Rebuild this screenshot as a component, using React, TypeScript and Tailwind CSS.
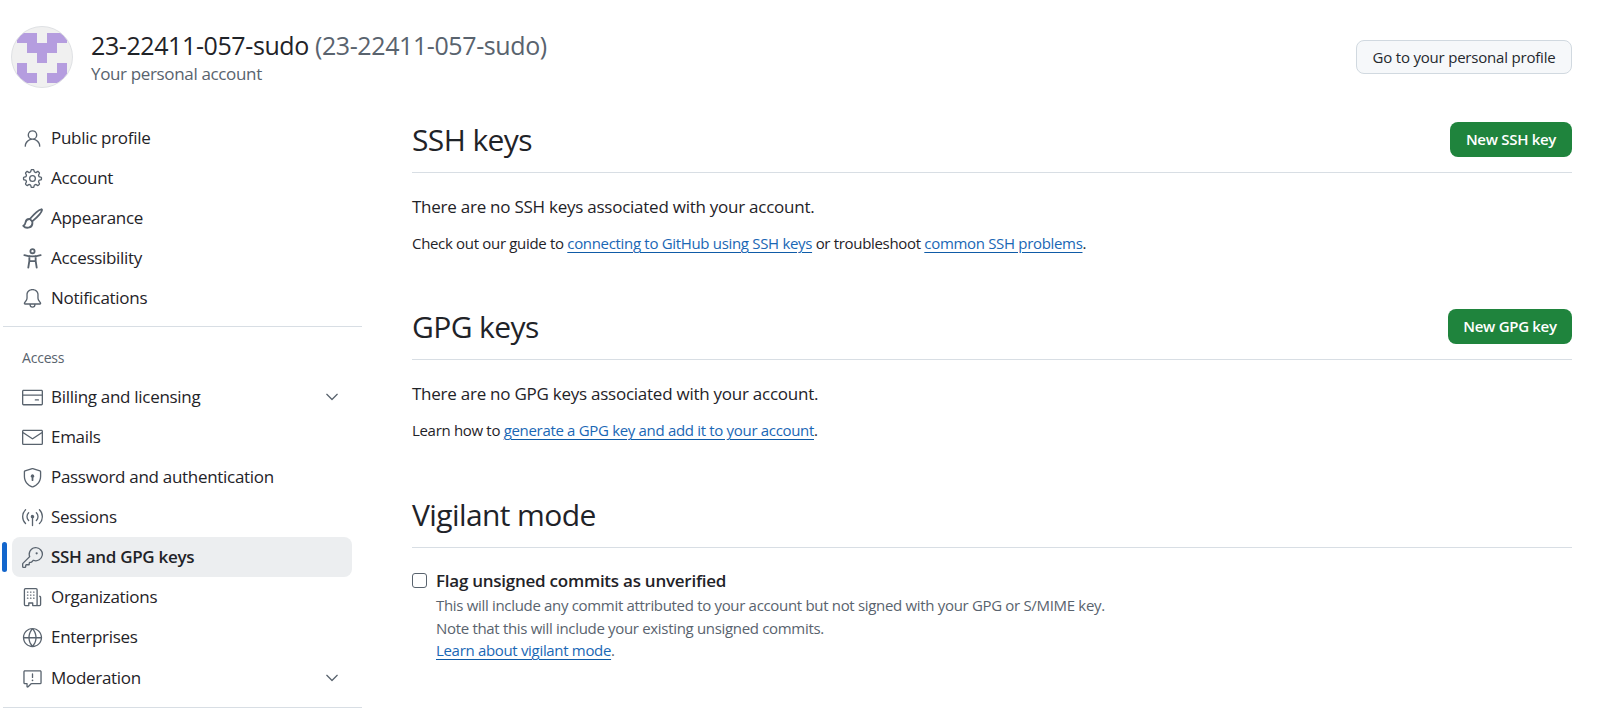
import {
  GoBell,
  GoBroadcast,
  GoChevronDown,
  GoCreditCard,
  GoGear,
  GoGlobe,
  GoKey,
  GoMail,
  GoOrganization,
  GoPerson,
  GoReport,
  GoShieldLock,
} from "react-icons/go";

const font = "font-['Open_Sans','Noto_Sans',sans-serif]";

const GoPaintbrush = ({ size, className }: any) => (
  <svg width={size} height={size} viewBox="0 0 16 16" fill="none" stroke="currentColor" strokeWidth="1.4" strokeLinejoin="round" strokeLinecap="round" className={className}>
    <path d="M14.6 1c-1.5.3-5.6 3.8-8.6 7.4l1.8 1.8c3.6-3 7.2-7.1 7.4-8.6.1-.5-.2-.7-.6-.6Z" />
    <path d="M6 8.4c-1.8-.2-3 .9-3.3 2.6-.2 1.3-.6 2-1.7 2.6 1 1.2 3 1.7 4.6 1.2 1.8-.5 2.6-2.2 2.2-4.6" />
  </svg>
);

const GoAccessibility = ({ size, className }: any) => (
  <svg width={size} height={size} viewBox="0 0 16 16" fill="none" stroke="currentColor" strokeWidth="1.4" strokeLinecap="round" strokeLinejoin="round" className={className}>
    <circle cx="8" cy="2.4" r="1.6" />
    <path d="M1.8 5.4c4 1.2 8.4 1.2 12.4 0M5.6 6.2v3.6L4.8 15M10.4 6.2v3.6l.8 5.2M5.6 10h4.8" />
  </svg>
);

const NavItem = ({ icon: Icon, label, active, chevron, className }: any) => (
  <div className={`relative h-10 ml-3 w-[340px] flex items-center ${className ?? ""}`}>
    {active && <div className="absolute -left-[10px] top-[5px] w-[5px] h-[30px] rounded-md bg-[#1366cc]" />}
    <div className={`absolute inset-0 rounded-lg ${active ? "bg-[#eceef0]" : ""}`} />
    <Icon size={21} className="relative ml-[10px] text-[#59636e] shrink-0" />
    <span className={`relative ml-[8px] text-[17px] tracking-[-0.3px] text-[#1f2328] ${active ? "font-semibold" : ""}`}>{label}</span>
    {chevron && <GoChevronDown size={20} className="absolute right-[10px] text-[#59636e]" />}
  </div>
);

const A = ({ children }: any) => (
  <a className="text-[#1a67b5] underline underline-offset-[3px] decoration-[#0f5ba7]">{children}</a>
);

const SectionHead = ({ title, button, width }: any) => (
  <div className="h-[51px] flex items-start justify-between border-b border-[#d8dee4]">
    <h2 className="text-[30px] leading-9 tracking-[-0.6px] text-[#1f2328]">{title}</h2>
    {button && (
      <button className={`${width} h-[35px] rounded-lg bg-[#1f843d] text-white text-[15px] font-semibold tracking-[-0.3px]`}>{button}</button>
    )}
  </div>
);

export default function App() {
  return (
    <div className={`h-[708px] overflow-hidden bg-white ${font}`}>
      <header className="flex items-start pt-[26px] pl-[11px] pr-[38px] h-[118px]">
        <svg width="62" height="62" viewBox="0 0 62 62" className="shrink-0">
          <clipPath id="avatar-clip">
            <circle cx="31" cy="31" r="30.5" />
          </clipPath>
          <circle cx="31" cy="31" r="30.5" fill="#f0f0f0" />
          <g clipPath="url(#avatar-clip)" fill="#b59ddf">
            <path d="M6 7H26V17H36V7H56V17H46V27H36V37H26V27H16V17H6Z" />
            <path d="M6 37H16V47H26V57H6ZM46 37H56V57H36V47H46Z" />
          </g>
          <circle cx="31" cy="31" r="30.5" fill="none" stroke="#dfe1e4" />
        </svg>
        <div className="ml-[18px] mt-[3px]">
          <div className="text-[25px] leading-8 tracking-[-0.4px] font-medium text-[#1f2328]">
            23-22411-057-sudo <span className="text-[#59636e] font-normal">(23-22411-057-sudo)</span>
          </div>
          <div className="mt-[1px] text-[17px] leading-6 tracking-[-0.35px] text-[#59636e]">Your personal account</div>
        </div>
        <button className="ml-auto mt-[14px] h-[34px] w-[216px] rounded-lg border border-[#d1d9e0] bg-[#f6f8fa] text-[15px] font-medium tracking-[-0.2px] text-[#25292e]">
          Go to your personal profile
        </button>
      </header>

      <div className="flex">
        <aside className="w-[412px] shrink-0">
          <NavItem icon={GoPerson} label="Public profile" />
          <NavItem icon={GoGear} label="Account" />
          <NavItem icon={GoPaintbrush} label="Appearance" />
          <NavItem icon={GoAccessibility} label="Accessibility" />
          <NavItem icon={GoBell} label="Notifications" />
          <div className="ml-[3px] w-[359px] mt-2 border-t border-[#d8dee4]" />
          <div className="ml-[22px] mt-[21px] mb-[9px] text-[14px] leading-5 font-medium tracking-[-0.2px] text-[#59636e]">Access</div>
          <NavItem icon={GoCreditCard} label="Billing and licensing" chevron />
          <NavItem icon={GoMail} label="Emails" />
          <NavItem icon={GoShieldLock} label="Password and authentication" />
          <NavItem icon={GoBroadcast} label="Sessions" />
          <NavItem icon={GoKey} label="SSH and GPG keys" active />
          <NavItem icon={GoOrganization} label="Organizations" />
          <NavItem icon={GoGlobe} label="Enterprises" />
          <NavItem icon={GoReport} label="Moderation" chevron className="mt-[1px]" />
          <div className="ml-[3px] w-[359px] mt-[9px] border-t border-[#d8dee4]" />
        </aside>

        <main className="w-[1160px] pt-1">
          <SectionHead title="SSH keys" button="New SSH key" width="w-[122px]" />
          <p className="mt-[22px] text-[17px] leading-6 tracking-[-0.25px] text-[#1f2328]">There are no SSH keys associated with your account.</p>
          <p className="mt-[14px] text-[15px] leading-5 tracking-[-0.32px] text-[#1f2328]">
            Check out our guide to <A>connecting to GitHub using SSH keys</A> or troubleshoot <A>common SSH problems</A>.
          </p>

          <div className="mt-[56px]">
            <SectionHead title="GPG keys" button="New GPG key" width="w-[124px]" />
          </div>
          <p className="mt-[22px] text-[17px] leading-6 tracking-[-0.25px] text-[#1f2328]">There are no GPG keys associated with your account.</p>
          <p className="mt-[14px] text-[15px] leading-5 tracking-[-0.32px] text-[#1f2328]">
            Learn how to <A>generate a GPG key and add it to your account</A>.
          </p>

          <div className="mt-[57px]">
            <SectionHead title="Vigilant mode" />
          </div>
          <div className="mt-[21px] flex items-start">
            <input type="checkbox" className="mt-[4px] w-[15px] h-[15px] appearance-none rounded-[3px] border border-[#59636e] bg-white" />
            <div className="ml-[9px]">
              <div className="text-[17px] leading-6 font-semibold tracking-[-0.25px] text-[#1f2328]">Flag unsigned commits as unverified</div>
              <div className="mt-[1px] text-[15px] leading-[22.5px] tracking-[-0.32px] text-[#59636e]">
                <div>This will include any commit attributed to your account but not signed with your GPG or S/MIME key.</div>
                <div>Note that this will include your existing unsigned commits.</div>
                <div><A>Learn about vigilant mode</A>.</div>
              </div>
            </div>
          </div>
        </main>
      </div>
    </div>
  );
}
